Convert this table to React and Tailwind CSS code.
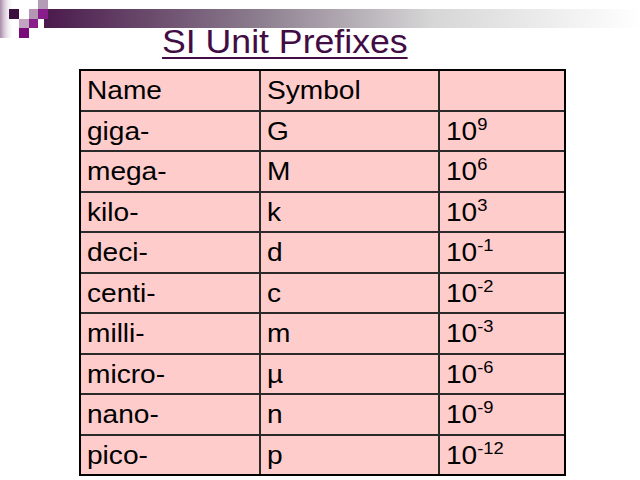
const ROWS = [
  ['Name', 'Symbol', null],
  ['giga-', 'G', '9'],
  ['mega-', 'M', '6'],
  ['kilo-', 'k', '3'],
  ['deci-', 'd', '-1'],
  ['centi-', 'c', '-2'],
  ['milli-', 'm', '-3'],
  ['micro-', 'µ', '-6'],
  ['nano-', 'n', '-9'],
  ['pico-', 'p', '-12'],
];

function Corner() {
  return (
    <svg className="absolute left-0 top-0" width="640" height="40" viewBox="0 0 640 40">
      <defs>
        <linearGradient id="bar" x1="0" x2="1" y1="0" y2="0">
          <stop offset="0" stopColor="#4a1a4c" />
          <stop offset="0.35" stopColor="#8a7a8c" />
          <stop offset="0.65" stopColor="#d6d6d6" />
          <stop offset="1" stopColor="#ffffff" />
        </linearGradient>
        <linearGradient id="strip" x1="0" x2="1" y1="0" y2="0">
          <stop offset="0" stopColor="#a88aa8" />
          <stop offset="1" stopColor="#ffffff" stopOpacity="0" />
        </linearGradient>
      </defs>
      <rect x="0" y="0" width="14" height="38" fill="url(#strip)" />
      <rect x="44" y="9" width="596" height="19" fill="url(#bar)" />
      <rect x="9" y="9" width="10" height="10" fill="#3d0f3f" />
      <rect x="29" y="9" width="9" height="10" fill="#b496b4" />
      <rect x="38" y="0" width="10" height="9" fill="#b49cb6" />
      <rect x="38" y="9" width="10" height="10" fill="#8b1c8b" />
      <rect x="19" y="19" width="10" height="9" fill="#c2a4c2" />
      <rect x="29" y="19" width="9" height="9" fill="#8b1c8b" />
      <rect x="19" y="28" width="10" height="10" fill="#7a0a7a" />
    </svg>
  );
}

function Cell({ children }) {
  return (
    <div className="bg-[#ffcccc] flex items-center pl-[6px] text-[26px] leading-none text-black">
      <span className="inline-block origin-left scale-x-[1.08] whitespace-nowrap">{children}</span>
    </div>
  );
}

export default function App() {
  return (
    <div className="relative w-[640px] h-[480px] bg-white overflow-hidden" style={{ fontFamily: '"Liberation Sans", Arial, sans-serif' }}>
      <Corner />
      <div className="relative pt-[25px] pl-[162px] h-[58px]">
        <h1 className="inline-block origin-left scale-x-[1.08] text-[33px] leading-[33px] text-[#420c44] underline decoration-[2px] underline-offset-[4px] whitespace-nowrap">
          SI Unit Prefixes
        </h1>
      </div>
      <div className="mt-[11px] ml-[79px] w-[487px] border-2 border-black bg-[#2a2a2a] grid grid-cols-[178px_177px_124px] grid-rows-[repeat(10,38.5px)] gap-[2px]">
        {ROWS.map(([name, sym, exp], i) => (
          <div key={i} className="contents">
            <Cell>{name}</Cell>
            <Cell>{sym}</Cell>
            <Cell>
              {exp && (
                <>
                  10<span className="relative -top-[10px] text-[17px]">{exp}</span>
                </>
              )}
            </Cell>
          </div>
        ))}
      </div>
    </div>
  );
}
